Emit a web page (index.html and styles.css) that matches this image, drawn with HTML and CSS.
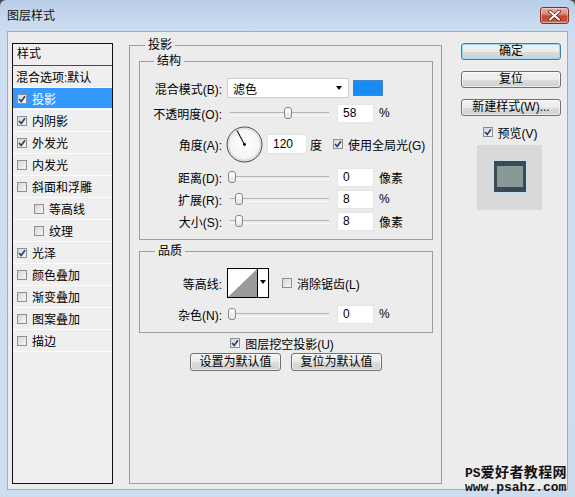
FILE: index.html
```html
<!DOCTYPE html>
<html lang="zh-CN">
<head>
<meta charset="utf-8">
<title>图层样式</title>
<link rel="stylesheet" href="styles.css">
</head>
<body>
<div class="window">
  <div class="titlebar">
    <span class="title">图层样式</span>
    <span class="close"><svg width="13" height="11" viewBox="0 0 13 11"><path d="M2 1.5 L11 9.5 M11 1.5 L2 9.5" stroke="#5a1d14" stroke-width="3.6" stroke-linecap="round"/><path d="M2 1.5 L11 9.5 M11 1.5 L2 9.5" stroke="#ffffff" stroke-width="2" stroke-linecap="round"/></svg></span>
  </div>
  <div class="client">
    <div class="stylelist">
      <div class="list-head">样式</div>
      <div class="item plain">混合选项:默认</div>
      <div class="item sel"><span class="cb on"><svg viewBox="0 0 8 8"><path d="M1 4 L3.2 6.4 L7 1.2" /></svg></span>投影</div>
      <div class="item"><span class="cb on"><svg viewBox="0 0 8 8"><path d="M1 4 L3.2 6.4 L7 1.2" /></svg></span>内阴影</div>
      <div class="item"><span class="cb on"><svg viewBox="0 0 8 8"><path d="M1 4 L3.2 6.4 L7 1.2" /></svg></span>外发光</div>
      <div class="item"><span class="cb"></span>内发光</div>
      <div class="item"><span class="cb"></span>斜面和浮雕</div>
      <div class="item sub"><span class="cb"></span>等高线</div>
      <div class="item sub"><span class="cb"></span>纹理</div>
      <div class="item"><span class="cb on"><svg viewBox="0 0 8 8"><path d="M1 4 L3.2 6.4 L7 1.2" /></svg></span>光泽</div>
      <div class="item"><span class="cb"></span>颜色叠加</div>
      <div class="item"><span class="cb"></span>渐变叠加</div>
      <div class="item"><span class="cb"></span>图案叠加</div>
      <div class="item"><span class="cb"></span>描边</div>
    </div>

    <fieldset class="group main">
      <legend>投影</legend>
      <fieldset class="group structure">
        <legend>结构</legend>
        <div class="row r-blend">
          <span class="lbl">混合模式(B):</span>
          <div class="select"><span>滤色</span><span class="arrow"></span></div>
          <span class="swatch"></span>
        </div>
        <div class="row r-opacity">
          <span class="lbl">不透明度(O):</span>
          <div class="slider"><span class="thumb" style="left:56px"></span></div>
          <span class="num">58</span>
          <span class="unit">%</span>
        </div>
        <div class="row r-angle">
          <span class="lbl">角度(A):</span>
          <svg class="dial" width="37" height="37" viewBox="0 0 37 37">
            <defs>
              <radialGradient id="dg" cx="50%" cy="45%" r="55%">
                <stop offset="0" stop-color="#ffffff"/>
                <stop offset="0.8" stop-color="#f4f4f4"/>
                <stop offset="1" stop-color="#dcdcdc"/>
              </radialGradient>
            </defs>
            <circle cx="18.5" cy="18.5" r="17.5" fill="url(#dg)" stroke="#4a4a4a" stroke-width="1"/>
            <circle cx="18.5" cy="18.5" r="16" fill="none" stroke="#d6d6d6" stroke-width="1"/>
            <path d="M18.5 18.5 L11 4.5" stroke="#111" stroke-width="1.1"/>
            <circle cx="18.5" cy="18.5" r="1.4" fill="#000"/>
          </svg>
          <span class="num wide">120</span>
          <span class="deg">度</span>
          <span class="cb on global"><svg viewBox="0 0 8 8"><path d="M1 4 L3.2 6.4 L7 1.2" /></svg></span>
          <span class="cbtext">使用全局光(G)</span>
        </div>
        <div class="row r-line first">
          <span class="lbl">距离(D):</span>
          <div class="slider"><span class="thumb" style="left:0px"></span></div>
          <span class="num">0</span>
          <span class="unit">像素</span>
        </div>
        <div class="row r-line">
          <span class="lbl">扩展(R):</span>
          <div class="slider"><span class="thumb" style="left:7px"></span></div>
          <span class="num">8</span>
          <span class="unit">%</span>
        </div>
        <div class="row r-line">
          <span class="lbl">大小(S):</span>
          <div class="slider"><span class="thumb" style="left:7px"></span></div>
          <span class="num">8</span>
          <span class="unit">像素</span>
        </div>
      </fieldset>

      <fieldset class="group quality">
        <legend>品质</legend>
        <div class="row r-contour">
          <span class="lbl">等高线:</span>
          <div class="contour">
            <svg width="29" height="28" viewBox="0 0 29 28"><polygon points="0,28 29,0 29,28" fill="#9a9a9a"/></svg>
            <span class="c-arrow"><span class="arrow"></span></span>
          </div>
          <span class="cb aa"></span>
          <span class="cbtext">消除锯齿(L)</span>
        </div>
        <div class="row r-noise">
          <span class="lbl">杂色(N):</span>
          <div class="slider"><span class="thumb" style="left:0px"></span></div>
          <span class="num">0</span>
          <span class="unit">%</span>
        </div>
      </fieldset>

      <div class="knockout">
        <span class="cb on"><svg viewBox="0 0 8 8"><path d="M1 4 L3.2 6.4 L7 1.2" /></svg></span>
        <span class="cbtext">图层挖空投影(U)</span>
      </div>
      <div class="defaults">
        <button class="btn">设置为默认值</button>
        <button class="btn">复位为默认值</button>
      </div>
    </fieldset>

    <div class="side">
      <button class="btn side-btn default">确定</button>
      <button class="btn side-btn">复位</button>
      <button class="btn side-btn">新建样式(W)...</button>
      <div class="preview-check">
        <span class="cb on"><svg viewBox="0 0 8 8"><path d="M1 4 L3.2 6.4 L7 1.2" /></svg></span>
        <span class="cbtext">预览(V)</span>
      </div>
      <div class="preview"><span class="swatch-prev"></span></div>
    </div>

    <div class="watermark">
      <div class="wm1">PS<span class="wm-cjk">爱好者教程网</span></div>
      <div class="wm2">www.psahz.com</div>
    </div>
  </div>
</div>
</body>
</html>
```

FILE: styles.css
```css
* { box-sizing: border-box; }

html, body {
  margin: 0;
  padding: 0;
  background: #4a4a4a;
}

body {
  font-family: "Liberation Sans", "Noto Sans CJK SC", sans-serif;
  font-size: 12px;
  color: #000;
}

.window {
  width: 575px;
  height: 497px;
  padding: 0 7px 7px 7px;
  display: flex;
  flex-direction: column;
  border-radius: 6px 6px 0 0;
  background: linear-gradient(#b9cee8 0px, #c9daee 22px, #cfdef0 40px, #cddcee 100%);
}

.titlebar {
  height: 31px;
  flex: none;
  display: flex;
  align-items: center;
  justify-content: space-between;
}

.title {
  font-size: 12px;
  line-height: 14px;
  padding-top: 1px;
  color: #111;
}

.close {
  width: 29px;
  height: 17px;
  margin-right: -1px;
  margin-top: -1px;
  border: 1px solid #7a3328;
  border-radius: 3px;
  background: linear-gradient(#eab0a2 0%, #dd8a78 40%, #c7442f 55%, #c9523d 85%, #dc8170 100%);
  display: flex;
  align-items: center;
  justify-content: center;
  box-shadow: inset 0 0 0 1px rgba(255,255,255,0.35);
}

.client {
  flex: 1;
  position: relative;
  background: #ececec;
  border: 1px solid #98aec6;
  display: flex;
  align-items: flex-start;
  padding-left: 4px;
}

/* ---------- style list ---------- */
.stylelist {
  margin-top: 11px;
  width: 101px;
  height: 441px;
  border: 1px solid #111;
  background: #efefef;
  flex: none;
}

.list-head {
  height: 22px;
  line-height: 20px;
  padding-left: 4px;
  border-bottom: 1px solid #4a4a4a;
}

.item {
  height: 22px;
  border-bottom: 1px solid #fdfdfd;
  display: flex;
  align-items: center;
  padding-left: 4px;
  white-space: nowrap;
}

.item.plain { padding-left: 3px; }
.item.sub { padding-left: 21px; }

.item .cb { margin-right: 5px; }

.item.sel {
  background: #3399ff;
  color: #fff;
  box-shadow: inset 0 -1px 0 #efefef;
}

/* ---------- checkbox ---------- */
.cb {
  width: 10px;
  height: 10px;
  flex: none;
  border: 1px solid #8e8f8f;
  background: linear-gradient(135deg, #d6d6d6, #f7f7f7);
  display: inline-flex;
  align-items: center;
  justify-content: center;
}

.cb svg {
  width: 8px;
  height: 8px;
}

.cb svg path {
  fill: none;
  stroke: #28446f;
  stroke-width: 1.7;
}

.cbtext { margin-left: 5px; white-space: nowrap; }

/* ---------- group boxes ---------- */
fieldset.group {
  margin: 0;
  border: 1px solid #9c9c9c;
  min-width: 0;
}

fieldset.group legend {
  padding: 0 3px;
  line-height: 14px;
  font-size: 12px;
}

fieldset.main {
  margin: 6px 0 0 16px;
  width: 313px;
  height: 446px;
  padding: 2px 8px 0 9px;
  flex: none;
}

fieldset.main > legend { margin-left: 6px; }

fieldset.structure {
  width: 294px;
  height: 186px;
  padding: 10px 0 0 0;
}

fieldset.structure > legend { margin-left: 14px; }

fieldset.quality {
  margin-top: 4px;
  width: 294px;
  height: 89px;
  padding: 10px 0 0 0;
}

fieldset.quality > legend { margin-left: 15px; }

/* ---------- rows ---------- */
.row {
  display: flex;
  align-items: center;
  white-space: nowrap;
}

.lbl {
  width: 82px;
  flex: none;
  text-align: right;
  margin-right: 5px;
}

.r-blend { height: 20px; }
.r-opacity { height: 20px; margin-top: 5px; }
.r-angle { height: 36px; margin-top: 3px; }
.r-line { height: 22px; }
.r-line.first { margin-top: 4px; }
.r-contour { height: 30px; }
.r-noise { height: 20px; margin-top: 6px; }

.select {
  width: 122px;
  height: 20px;
  background: #fff;
  border: 1px solid #cfcfcf;
  display: flex;
  align-items: center;
  justify-content: space-between;
  padding: 0 6px 0 5px;
}

.arrow {
  width: 0;
  height: 0;
  border-left: 3.5px solid transparent;
  border-right: 3.5px solid transparent;
  border-top: 4px solid #000;
}

.swatch {
  margin-left: 4px;
  width: 30px;
  height: 16px;
  background: #188cf6;
  border: 1px solid #4a86c4;
}

.slider {
  position: relative;
  width: 101px;
  height: 12px;
  margin-left: 1px;
  flex: none;
}

.slider::before {
  content: "";
  position: absolute;
  left: 2px;
  right: 0;
  top: 5px;
  height: 2px;
  border-top: 1px solid #b4b4b4;
  border-bottom: 1px solid #fbfbfb;
}

.thumb {
  position: absolute;
  top: 0;
  width: 8px;
  height: 12px;
  border: 1px solid #8a8a8a;
  border-radius: 3px 3px 3px 3px;
  background: linear-gradient(#ffffff, #e2e2e2);
}

.num {
  margin-left: 8px;
  width: 37px;
  height: 19px;
  flex: none;
  background: #fff;
  border: 1px solid #e4e4e4;
  padding-left: 5px;
  line-height: 17px;
}

.num.wide {
  margin-left: 4px;
  width: 40px;
  height: 20px;
  line-height: 18px;
}

.unit { margin-left: 5px; }

.dial { margin-left: -1px; flex: none; }

.deg { margin-left: 3px; }

.cb.global { margin-left: 11px; }

.contour {
  width: 42px;
  height: 30px;
  border: 1px solid #000;
  background: #fff;
  display: flex;
  flex: none;
}

.contour svg { display: block; }

.c-arrow {
  width: 11px;
  border-left: 1px solid #000;
  display: flex;
  justify-content: center;
  padding-top: 11px;
}

.cb.aa { margin-left: 13px; }

.knockout {
  margin-top: 2px;
  height: 16px;
  display: flex;
  align-items: center;
  justify-content: center;
  padding-right: 8px;
}

.defaults {
  margin-top: 2px;
  display: flex;
  justify-content: center;
  gap: 10px;
}

/* ---------- buttons ---------- */
.btn {
  font-family: "Liberation Sans", "Noto Sans CJK SC", sans-serif;
  font-size: 12px;
  color: #000;
  height: 18px;
  width: 91px;
  padding: 0;
  border: 1px solid #707070;
  border-radius: 3px;
  background: linear-gradient(#f3f3f3 0%, #ebebeb 50%, #dddddd 51%, #cfcfcf 100%);
  box-shadow: inset 0 0 0 1px rgba(255,255,255,0.6);
  line-height: 16px;
}

.side {
  margin-left: 19px;
  margin-top: 11px;
  width: 100px;
  display: flex;
  flex-direction: column;
  align-items: center;
  flex: none;
}

.side-btn {
  width: 100px;
  height: 17px;
  line-height: 15px;
  margin-bottom: 11px;
}

.side-btn.default {
  border-color: #3c7fb1;
  box-shadow: inset 0 0 0 1px #9fd5f4;
}

.preview-check {
  display: flex;
  align-items: center;
  height: 12px;
  margin-top: -1px;
  padding-right: 2px;
}

.preview {
  margin-top: 7px;
  margin-right: 3px;
  width: 65px;
  height: 65px;
  background: #d9d9d9;
  display: flex;
  align-items: center;
  justify-content: center;
  padding-bottom: 2px;
}

.swatch-prev {
  width: 32px;
  height: 31px;
  background: #899997;
  border-style: solid;
  border-color: #3d4853;
  border-width: 5px 3px 5px 3px;
  box-shadow: 0 0 2px 1px #bfe0f6;
}

/* ---------- watermark ---------- */
.watermark {
  position: absolute;
  left: 457px;
  top: 432px;
  font-weight: bold;
  line-height: 14px;
  color: #111;
  white-space: nowrap;
}

.wm1 {
  font-family: "Liberation Mono", "Noto Sans CJK SC", monospace;
  font-size: 13px;
}

.wm-cjk {
  font-family: "Noto Sans CJK SC", sans-serif;
  font-size: 14px;
  letter-spacing: 0.4px;
}

.wm2 {
  font-family: "Liberation Mono", monospace;
  font-size: 13px;
  line-height: 13px;
}
```
